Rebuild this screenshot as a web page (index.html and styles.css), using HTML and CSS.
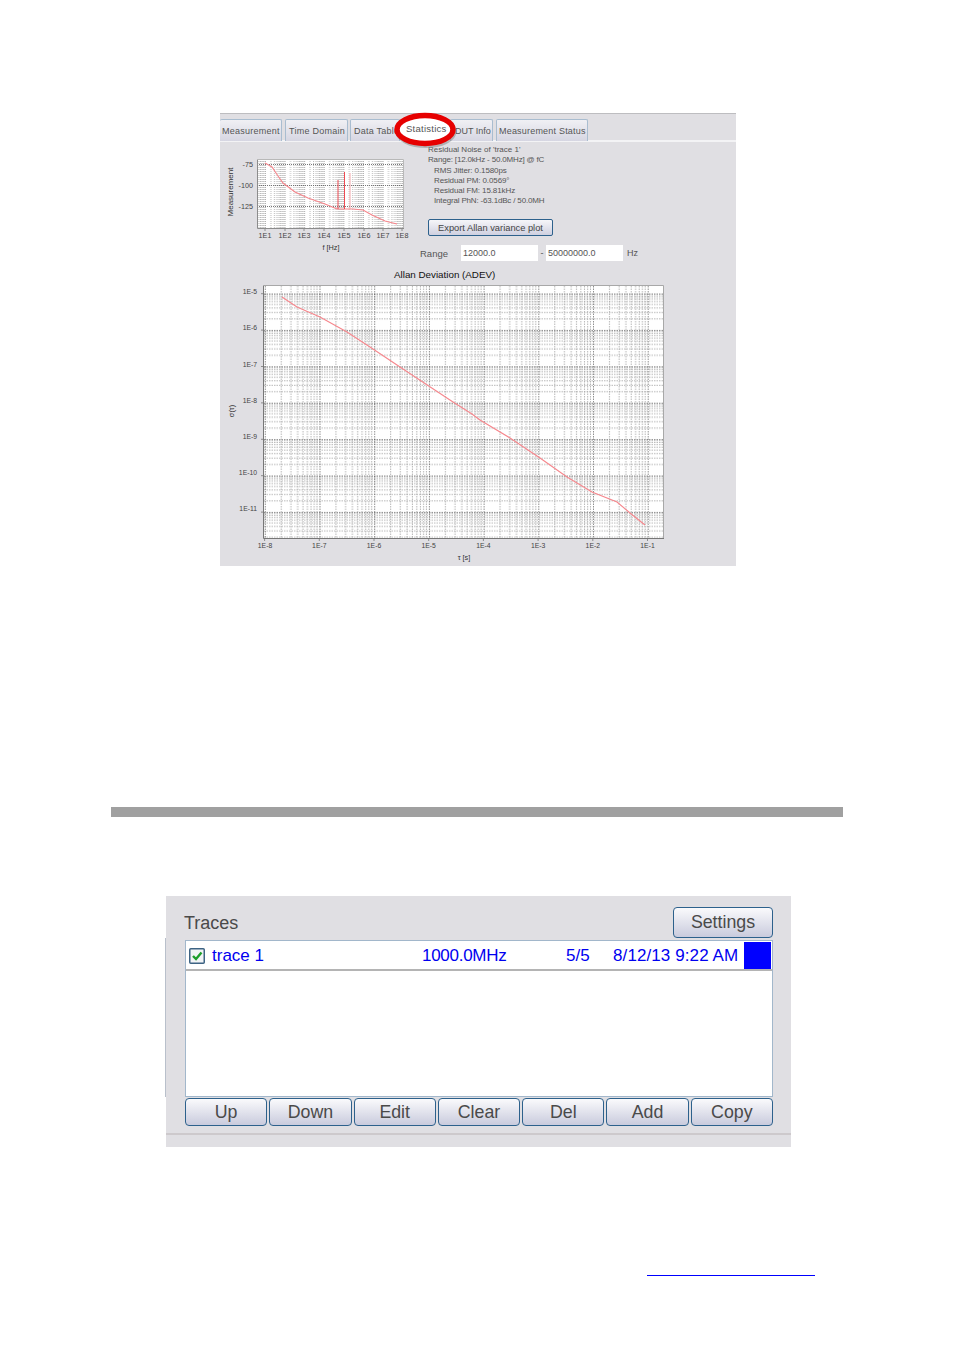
FILE: index.html
```html
<!DOCTYPE html>
<html lang="en">
<head>
<meta charset="utf-8">
<title>Statistics and traces</title>
<link rel="stylesheet" href="styles.css">
</head>
<body>
<main class="page">
  <section class="stats">
    <nav class="tabs">
      <span class="tab tab-first">Measurement</span>
      <span class="tab tab-time">Time Domain</span>
      <span class="tab tab-data">Data Table</span>
      <span class="tab-selected">Statistics</span>
      <span class="tab tab-dut">DUT Info</span>
      <span class="tab tab-status">Measurement Status</span>
      <svg class="ring" viewBox="0 0 64 40" aria-hidden="true">
        <ellipse cx="33" cy="19.5" rx="28" ry="14" fill="none" stroke="#8a8a8a" stroke-opacity=".55" stroke-width="5"/>
        <ellipse cx="32" cy="17.5" rx="28" ry="14" fill="#fff" stroke="#e60000" stroke-width="5.5"/>
      </svg>
    </nav>
    <div class="top">
      <svg class="mini" viewBox="220 145 200 112" aria-label="Measurement chart">
        <defs>
          <pattern id="miniGrid" patternUnits="userSpaceOnUse" x="265" y="159" width="19.6" height="69">
            <path d="M5.9 0V69M9.4 0V69M11.8 0V69M13.7 0V69M15.2 0V69M16.6 0V69M17.7 0V69M18.7 0V69" stroke="#a6a6a6" stroke-width=".8" stroke-dasharray="1 1" fill="none"/>
            <path d="M0 0V69" stroke="#555" stroke-width=".9" stroke-dasharray="1 1" fill="none"/>
          </pattern>
        </defs>
        <rect x="257" y="159" width="147" height="69" fill="#fff"/>
        <rect x="257" y="159" width="147" height="69" fill="url(#miniGrid)"/>
        <path d="M257 164.500H404M257 185.500H404M257 206.500H404" stroke="#555" stroke-width=".8" stroke-dasharray="1 1"/>
        <path d="M257.500 159V228.500H404" stroke="#8c8c8c" fill="none"/>
        <path d="M257 159.500H403.500V228" stroke="#b8b8b8" fill="none"/>
        <path d="M265 229V231M285 229V231M304 229V231M324 229V231M344 229V231M364 229V231M383 229V231M402 229V231" stroke="#777" stroke-width=".8"/>
        <path class="trace" d="M265 163L272 167L278 176L283 183L295 192L308 198L325 204L337 209L353 209L363 210L372 215L385 221L397 224"/>
        <path class="spike" d="M338 209V180M344.500 209V172"/>
        <path class="trace faint" d="M350 209V173"/>
        <g class="tick">
          <text x="253" y="167">-75</text><text x="253" y="188">-100</text><text x="253" y="209">-125</text>
        </g>
        <g class="tick mid">
          <text x="265" y="237.500">1E1</text><text x="285" y="237.500">1E2</text><text x="304" y="237.500">1E3</text><text x="324" y="237.500">1E4</text><text x="344" y="237.500">1E5</text><text x="364" y="237.500">1E6</text><text x="383" y="237.500">1E7</text><text x="402" y="237.500">1E8</text>
        </g>
        <text class="axis-name" x="331" y="249.500">f [Hz]</text>
        <text class="axis-name axis-long" transform="translate(233 192) rotate(-90)">Measurement</text>
      </svg>
      <div class="side">
        <div class="info">
          <p>Residual Noise of 'trace 1'</p>
          <p class="tight">Range: [12.0kHz - 50.0MHz] @ fC</p>
          <p class="indent">RMS Jitter: 0.1580ps</p>
          <p class="indent">Residual PM: 0.0569°</p>
          <p class="indent">Residual FM: 15.81kHz</p>
          <p class="indent tight">Integral PhN: -63.1dBc / 50.0MH</p>
        </div>
        <button class="export" type="button">Export Allan variance plot</button>
        <div class="range">
          <span class="range-label">Range</span>
          <span class="field">12000.0</span>
          <span class="dash">-</span>
          <span class="field">50000000.0</span>
          <span class="unit">Hz</span>
        </div>
      </div>
    </div>
    <h2 class="title">Allan Deviation (ADEV)</h2>
    <svg class="adev" viewBox="220 281 516 285" aria-label="Allan deviation chart">
      <defs>
        <pattern id="gridX" patternUnits="userSpaceOnUse" x="319.500" y="286" width="54.7" height="252">
          <path d="M16.500 0V252M26.100 0V252M32.900 0V252M38.200 0V252M42.600 0V252M46.200 0V252M49.400 0V252M52.200 0V252" stroke="#a4a4a4" stroke-width=".8" stroke-dasharray="1.500 1" fill="none"/>
          <path d="M0 0V252" stroke="#222" stroke-width="1" stroke-dasharray="1.500 1" fill="none"/>
        </pattern>
        <pattern id="gridY" patternUnits="userSpaceOnUse" x="264" y="293.500" width="400" height="36.4">
          <path d="M0 1.700H400M0 3.500H400M0 5.600H400M0 8.100H400M0 11H400M0 14.500H400M0 19H400M0 25.400H400" stroke="#a4a4a4" stroke-width=".8" stroke-dasharray="1.500 1" fill="none"/>
          <path d="M0 0H400" stroke="#222" stroke-width="1" stroke-dasharray="1.500 1" fill="none"/>
        </pattern>
      </defs>
      <rect x="264" y="286" width="399" height="252" fill="#fff"/>
      <rect x="264" y="286" width="399" height="252" fill="url(#gridY)"/>
      <rect x="264" y="286" width="399" height="252" fill="url(#gridX)"/>
      <path d="M263.500 285.500V538.500H664" stroke="#777" fill="none"/>
      <path d="M263.500 285.500H663.500V538" stroke="#a8a8a8" fill="none"/>
      <path d="M261 293.700H263M261 330.100H263M261 366.500H263M261 402.900H263M261 439.300H263M261 475.700H263M261 512.100H263" stroke="#777" stroke-width=".8"/>
      <path d="M264.600 539V541M319.300 539V541M374 539V541M428.700 539V541M483.400 539V541M538.100 539V541M592.800 539V541M647.500 539V541" stroke="#777" stroke-width=".8"/>
      <path class="trace" d="M282 297L297 307L320 317L347 332L370 347L400 367L453 402L472 414L480 420L510 438L540 458L567 477L592 492L617 502L630 513L645 525"/>
      <g class="tick">
        <text x="257" y="293.500">1E-5</text><text x="257" y="330">1E-6</text><text x="257" y="366.500">1E-7</text><text x="257" y="402.500">1E-8</text><text x="257" y="439">1E-9</text><text x="257" y="475">1E-10</text><text x="257" y="511">1E-11</text>
      </g>
      <g class="tick mid">
        <text x="265" y="548">1E-8</text><text x="319.300" y="548">1E-7</text><text x="374" y="548">1E-6</text><text x="428.700" y="548">1E-5</text><text x="483.400" y="548">1E-4</text><text x="538.100" y="548">1E-3</text><text x="592.800" y="548">1E-2</text><text x="647.500" y="548">1E-1</text>
      </g>
      <text class="axis-name" x="464" y="559.500">τ [s]</text>
      <text class="axis-name" transform="translate(234 411) rotate(-90)">σ(τ)</text>
    </svg>
  </section>

  <hr class="rule">

  <section class="traces">
    <span class="left-edge"></span>
    <header class="traces-head">
      <h2 class="traces-title">Traces</h2>
      <button class="btn settings" type="button">Settings</button>
    </header>
    <div class="list">
      <div class="row">
        <svg class="check" viewBox="0 0 16 16" aria-hidden="true">
          <rect x=".75" y=".75" width="14.5" height="14.5" rx="1" fill="#f2f4f6" stroke="#3d6383" stroke-width="1.500"/>
          <path d="M4 8l3 3 5.500-6.500" fill="none" stroke="#1e9e2c" stroke-width="2.400"/>
        </svg>
        <span class="col-name">trace 1</span>
        <span class="col-freq">1000.0MHz</span>
        <span class="col-count">5/5</span>
        <span class="col-date">8/12/13 9:22 AM</span>
        <span class="swatch"></span>
      </div>
    </div>
    <div class="actions">
      <button class="btn" type="button">Up</button>
      <button class="btn" type="button">Down</button>
      <button class="btn" type="button">Edit</button>
      <button class="btn" type="button">Clear</button>
      <button class="btn" type="button">Del</button>
      <button class="btn" type="button">Add</button>
      <button class="btn" type="button">Copy</button>
    </div>
    <div class="status"></div>
  </section>

  <div class="footer-link"></div>
</main>
</body>
</html>
```
FILE: styles.css
```css
* { box-sizing: border-box; }
html, body { margin: 0; padding: 0; background: #fff; }
body { font-family: "Liberation Sans", Arial, sans-serif; color: #444; }
.page { width: 954px; height: 1350px; padding-top: 113px; overflow: hidden; }
p, h2 { margin: 0; font-weight: 400; }

/* first screenshot */
.stats { width: 516px; height: 453px; margin-left: 220px; background: #e0dfe3; border-top: 1px solid #bdbdc0; }
.tabs { position: relative; display: flex; height: 28px; padding-top: 5px; border-bottom: 2px solid #f3f3f5; font-size: 9px; letter-spacing: .25px; }
.tab { display: flex; align-items: center; height: 22px; padding-left: 3px; background: linear-gradient(#f0f0f4, #d6d6e2); border: 1px solid #a9bdd0; border-bottom: 0; border-radius: 2px 2px 0 0; color: #555; white-space: nowrap; overflow: hidden; }
.tab-first { width: 62px; padding-left: 2px; border-left: 0; }
.tab-time { width: 63px; margin-left: 3px; }
.tab-data { width: 50px; margin-left: 2px; }
.tab-selected { position: relative; z-index: 2; width: 50px; height: 20px; padding: 4px 0 0 6px; color: #555; font-size: 9.5px; white-space: nowrap; }
.tab-dut { width: 43px; padding-left: 4px; letter-spacing: 0; }
.tab-status { width: 92px; margin-left: 3px; padding-left: 2px; letter-spacing: .2px; }
.ring { position: absolute; z-index: 1; left: 173px; top: -2px; width: 64px; height: 40px; }

.top { display: flex; height: 126px; }
.mini { display: block; width: 200px; height: 112px; margin-top: 3px; flex: none; }
.side { width: 240px; }
.info { height: 70px; padding: 3px 0 0 8px; font-size: 8px; line-height: 10.3px; color: #555; white-space: nowrap; }
.indent { padding-left: 6px; letter-spacing: -.1px; }
.info .tight { letter-spacing: -.17px; }
.export { display: block; width: 125px; height: 17px; margin: 7px 0 0 8px; padding: 0; border: 1px solid #2d618c; border-radius: 2px; background: linear-gradient(#f6f6f9, #cfd0e0); font: 9.3px "Liberation Sans", Arial, sans-serif; color: #444; }
.range { display: flex; align-items: center; height: 16px; margin-top: 9px; font-size: 9px; color: #555; }
.range-label { width: 41px; font-size: 9.5px; }
.field { width: 77px; height: 16px; padding-left: 2px; background: #fff; line-height: 16px; font-size: 9px; }
.dash { width: 8px; text-align: center; }
.unit { margin-left: 4px; }

.title { height: 13px; padding-left: 174px; font-size: 9.8px; line-height: 13px; color: #111; }
.adev { display: block; width: 516px; height: 285px; }
.trace { fill: none; stroke: #f6868c; stroke-width: 1.1; }
.spike { fill: none; stroke: #ee4a52; stroke-width: 1; }
.trace.faint { stroke: #f7a3a6; stroke-width: .9; }
.tick text { font: 6.8px "Liberation Sans", Arial, sans-serif; fill: #444; text-anchor: end; }
.mini .tick text { font-size: 7.2px; }
.tick.mid text { text-anchor: middle; }
.axis-name { font: 7.3px "Liberation Sans", Arial, sans-serif; fill: #333; text-anchor: middle; }
.axis-long { font-size: 8px; }

/* divider */
.rule { width: 732px; height: 10px; margin: 241px 0 0 111px; border: 0; background: #a0a0a0; }

/* second screenshot */
.traces { position: relative; width: 625px; height: 251px; margin: 79px 0 0 166px; padding: 11px 18px 0 19px; background: #e0dfe3; }
.left-edge { position: absolute; left: -1px; top: 42px; width: 1px; height: 159px; background: #b9c0cb; }
.traces-head { display: flex; justify-content: space-between; align-items: center; height: 33px; }
.traces-title { margin-left: -1px; font-size: 18px; color: #4a4a4a; }
.btn { padding: 0; border: 1px solid #2d618c; border-radius: 4px; background: linear-gradient(#fafafc, #c9cbdd); font: 17.8px "Liberation Sans", Arial, sans-serif; color: #4a4a4a; }
.settings { width: 100px; height: 31px; margin-bottom: 2px; }
.list { height: 157px; background: #fff; border: 1px solid #a2b7cb; }
.row { display: flex; align-items: center; height: 30px; padding-top: 1px; border-bottom: 2px solid #b4b4b4; font-size: 17px; color: #0000f0; white-space: nowrap; }
.check { width: 16px; height: 16px; margin-left: 3px; flex: none; }
.col-name { width: 210px; margin-left: 7px; }
.col-freq { width: 144px; letter-spacing: -.28px; }
.col-count { width: 47px; }
.col-date { width: 131px; letter-spacing: .1px; }
.swatch { width: 27px; height: 27px; margin-top: -1px; background: #0000ff; }
.actions { display: flex; gap: 2px; height: 28px; margin-top: 1px; }
.actions .btn { flex: 1; }
.status { height: 2px; margin: 7px -18px 0 -19px; background: #cdc9cc; }

.footer-link { width: 168px; height: 1px; margin: 128px 0 0 647px; background: #0000ff; }
```
